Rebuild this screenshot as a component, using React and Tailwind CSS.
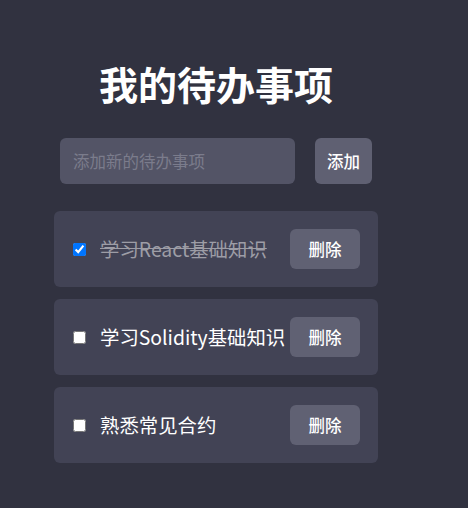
import React, { useState } from 'react';

const initialTodos = [
  { id: 1, text: '学习React基础知识', done: true },
  { id: 2, text: '学习Solidity基础知识', done: false },
  { id: 3, text: '熟悉常见合约', done: false },
];

const TodoItem = ({ todo, onToggle, onDelete }) => {
  return (
    <li className="flex items-center h-[76px] pl-[15px] pr-[18px] bg-[#424355] rounded-[6px]">
      <input
        type="checkbox"
        checked={todo.done}
        onChange={() => onToggle(todo.id)}
        className="w-[13px] h-[13px] ml-[4px] mr-[14px] accent-[#0075ff]"
      />
      <span
        className={
          todo.done
            ? 'flex-1 text-[19.4px] text-[#9d9da6] line-through'
            : 'flex-1 text-[19.4px] text-white'
        }
      >
        {todo.text}
      </span>
      <button
        onClick={() => onDelete(todo.id)}
        className="w-[70px] h-[40px] rounded-[6px] bg-[#606173] text-white text-[16.5px] font-medium"
      >
        删除
      </button>
    </li>
  );
};

const App = () => {
  const [todos, setTodos] = useState(initialTodos);
  const [text, setText] = useState('');

  const add = () => {
    if (!text.trim()) return;
    setTodos([...todos, { id: Date.now(), text, done: false }]);
    setText('');
  };

  return (
    <div
      className="min-h-[508px] bg-[#313240]"
      style={{ fontFamily: '"Noto Sans CJK SC", "Noto Sans", sans-serif' }}
    >
      <div className="w-[432px] pt-[60px] flex flex-col items-center">
        <h1 className="text-[39px] leading-[46px] font-bold text-white">我的待办事项</h1>

        <div className="flex mt-[32px] gap-[20px]">
          <input
            type="text"
            value={text}
            onChange={(e) => setText(e.target.value)}
            placeholder="添加新的待办事项"
            className="w-[235px] h-[46px] px-[13px] rounded-[6px] bg-[#535466] text-white text-[16.5px] placeholder:text-[#7b7c8c] outline-none"
          />
          <button
            onClick={add}
            className="w-[57px] h-[46px] rounded-[6px] bg-[#5f6072] text-white text-[16.5px] font-medium"
          >
            添加
          </button>
        </div>

        <ul className="w-[324px] mt-[27px] flex flex-col gap-[12px]">
          {todos.map((t) => (
            <TodoItem
              key={t.id}
              todo={t}
              onToggle={(id) =>
                setTodos(todos.map((x) => (x.id === id ? { ...x, done: !x.done } : x)))
              }
              onDelete={(id) => setTodos(todos.filter((x) => x.id !== id))}
            />
          ))}
        </ul>
      </div>
    </div>
  );
};

export default App;
